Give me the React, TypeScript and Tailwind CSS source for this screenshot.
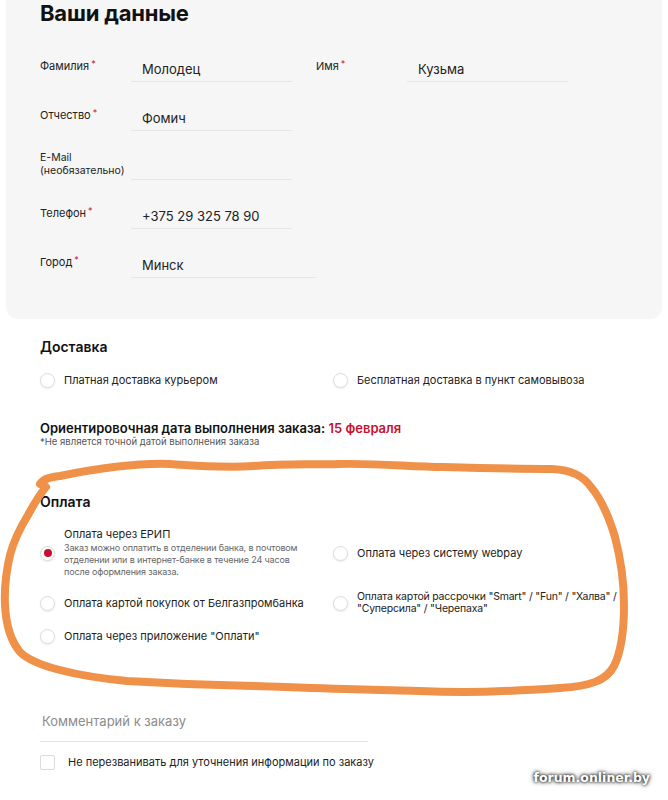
import React from "react";

const font = { fontFamily: "Inter, 'Noto Sans', Arial, sans-serif" };

function Star() {
  return <span className="text-[#c8102e] text-[9px] align-top ml-[2px] relative top-[-2px]">*</span>;
}

function Field({ label, value, width = 161, req = true, labelClass = "" }: { label: React.ReactNode; value?: string; width?: number; req?: boolean; labelClass?: string }) {
  return (
    <div className="flex items-start">
      <div className={"w-[91px] text-[11px] leading-[16px] text-[#222] " + labelClass}>
        {label}
        {req && <Star />}
      </div>
      <div className="h-[24px] border-b border-[#e6e6e6] pt-[3px] pl-[11px] text-[13px] leading-[16px] text-[#222]" style={{ width }}>
        {value}
      </div>
    </div>
  );
}

function Radio({ checked = false }: { checked?: boolean }) {
  return (
    <span className="w-[15px] h-[15px] shrink-0 rounded-full border border-[#dcdcdc] bg-white flex items-center justify-center shadow-[0_1px_2px_rgba(0,0,0,0.08)]">
      {checked && <span className="w-[8px] h-[8px] rounded-full bg-[#c8102e]" />}
    </span>
  );
}

export default function App() {
  return (
    <div className="relative w-[668px] min-h-[800px] bg-white overflow-hidden" style={font}>
      {/* Card */}
      <div className="mx-[6px] bg-[#f6f6f6] rounded-b-[12px] pl-[34px] pb-[41px]">
        <h1 className="text-[22px] leading-[26px] font-bold text-[#111] tracking-[-0.2px]">Ваши данные</h1>
        <div className="mt-[32px] flex flex-col gap-[25px]">
          <div className="flex gap-[24px]">
            <Field label="Фамилия" value="Молодец" />
            <Field label="Имя" value="Кузьма" />
          </div>
          <Field label="Отчество" value="Фомич" />
          <Field
            label={<span className="block text-[10.5px] leading-[13px] mt-[-5px]">E-Mail<br />(необязательно)</span>}
            req={false}
          />
          <Field label="Телефон" value="+375 29 325 78 90" />
          <Field label="Город" value="Минск" width={185} />
        </div>
      </div>

      {/* Delivery */}
      <div className="px-[40px]">
        <h2 className="mt-[19px] text-[14px] leading-[18px] font-semibold text-[#111]">Доставка</h2>
        <div className="mt-[16px] flex items-center h-[16px]">
          <div className="w-[293px] flex items-center gap-[9px]">
            <Radio />
            <span className="text-[11px] text-[#222]">Платная доставка курьером</span>
          </div>
          <div className="flex items-center gap-[9px]">
            <Radio />
            <span className="text-[11px] text-[#222]">Бесплатная доставка в пункт самовывоза</span>
          </div>
        </div>

        <div className="mt-[32px] text-[13px] leading-[16px] font-semibold text-[#111]">
          Ориентировочная дата выполнения заказа: <span className="text-[#c8102e]">15 февраля</span>
        </div>
        <div className="text-[9.5px] leading-[12px] text-[#555]">*Не является точной датой выполнения заказа</div>

        <h2 className="mt-[45px] text-[14px] leading-[18px] font-semibold text-[#111]">Оплата</h2>

        <div className="mt-[17px] flex flex-col gap-[13px]">
          <div className="flex items-center">
            <div className="w-[293px] flex items-center gap-[9px]">
              <Radio checked />
              <div>
                <div className="text-[11px] leading-[12px] text-[#222]">Оплата через ЕРИП</div>
                <div className="text-[9px] leading-[12px] tracking-[-0.15px] text-[#666] mt-[2px] w-[250px]">
                  Заказ можно оплатить в отделении банка, в почтовом отделении или в интернет-банке в течение 24 часов после оформления заказа.
                </div>
              </div>
            </div>
            <div className="flex items-center gap-[9px]">
              <Radio />
              <span className="text-[11px] text-[#222]">Оплата через систему webpay</span>
            </div>
          </div>
          <div className="flex items-center">
            <div className="w-[293px] flex items-center gap-[9px]">
              <Radio />
              <span className="text-[11px] text-[#222]">Оплата картой покупок от Белгазпромбанка</span>
            </div>
            <div className="flex items-center gap-[9px]">
              <Radio />
              <span className="text-[10.5px] leading-[12px] tracking-[-0.2px] text-[#222] w-[270px]">
                Оплата картой рассрочки "Smart" / "Fun" / "Халва" / "Суперсила" / "Черепаха"
              </span>
            </div>
          </div>
          <div className="flex items-center h-[16px]">
            <div className="flex items-center gap-[9px]">
              <Radio />
              <span className="text-[11px] text-[#222]">Оплата через приложение "Оплати"</span>
            </div>
          </div>
        </div>

        <div className="mt-[69px] w-[328px] border-b border-[#e3e3e3] pb-[12px] pl-[2px] text-[13px] leading-[16px] text-[#8c8c8c]">
          Комментарий к заказу
        </div>
        <div className="mt-[12px] flex items-center gap-[13px]">
          <span className="w-[15px] h-[15px] rounded-[2px] border border-[#dcdcdc] bg-white" />
          <span className="text-[11px] text-[#222]">Не перезванивать для уточнения информации по заказу</span>
        </div>
      </div>

      {/* Hand-drawn orange oval */}
      <svg className="absolute left-0 top-0 pointer-events-none" width="668" height="800" viewBox="0 0 668 800">
        <path
          d="M40 484 C44 478 52 477 60 476 C100 468 140 463 170 464 C200 466 225 468 253 466 C290 463 315 465 338 464 C380 463 410 467 443 467 C480 468 520 469 552 469 C572 470 583 476 591 487 C601 499 609 517 615 537 C621 560 624 585 624 605 C624 630 621 652 614 666 C606 681 590 686 560 688 C530 690 500 692 464 692 C430 692 400 690 380 690 C330 689 290 687 253 686 C200 685 160 683 127 681 C95 678 75 674 60 670 C40 665 28 660 20 652 C10 640 6 625 5 605 C4 585 7 568 10 555 C14 540 20 528 28 515 C34 504 40 494 46 487"
          fill="none"
          stroke="#f0914a"
          strokeWidth="8"
          strokeLinecap="round"
          strokeLinejoin="round"
        />
      </svg>

      {/* Watermark */}
      <div
        className="absolute right-[18px] top-[770px] text-[12.5px] font-bold text-white leading-[16px] [text-shadow:0_0_3px_#000,0_0_5px_rgba(0,0,0,0.8)]"
        style={{ fontFamily: "'DejaVu Sans', Arial, sans-serif" }}
      >
        forum.onliner.by
      </div>
    </div>
  );
}
